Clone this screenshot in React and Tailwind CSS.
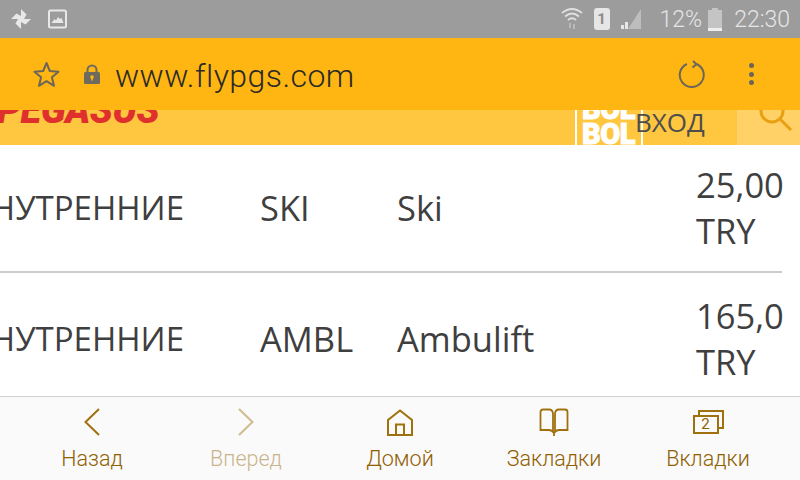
import React from "react";

const navGold = "#a0700f";

const StatusBar = () => (
  <div className="h-[38px] bg-[#9c9c9c] flex items-center shrink-0 pl-[11px] pr-[10px] text-[#e6e6e6]">
    <svg width="20" height="20" viewBox="0 0 20 20" fill="#e8e8e8">
      <path d="M10 10 L10 0 L15.500 5.500 L13 10 Z" />
      <path d="M10 10 L20 10 L14.500 15.500 L10 13 Z" />
      <path d="M10 10 L10 20 L4.500 14.500 L7 10 Z" />
      <path d="M10 10 L0 10 L5.500 4.500 L10 7 Z" />
    </svg>
    <svg className="ml-[17px]" width="19" height="20" viewBox="0 0 19 20" fill="none">
      <rect x="1" y="1.500" width="17" height="17" rx="1.500" stroke="#e8e8e8" strokeWidth="2" />
      <path d="M3.500 14 L6.500 10 L8 11.500 L10 8 L12 10 L13.500 9 L15.500 14 Z" fill="#e8e8e8" />
    </svg>
    <div className="flex-1" />
    <svg width="22" height="24" viewBox="0 0 22 24" fill="none" stroke="#e0e0e0" strokeWidth="1.800">
      <path d="M1 6 Q11 -2 21 6" />
      <path d="M4 9.500 Q11 3.500 18 9.500" />
      <path d="M7 13 Q11 9.500 15 13" />
      <path d="M9 21 V16 M13 17 V22" stroke="#bdbdbd" />
    </svg>
    <div className="ml-[11px] w-[16px] h-[22px] bg-[#e6e6e6] rounded-[3px] flex items-center justify-center text-[#8c8c8c] text-[15px] font-bold font-['Roboto',sans-serif]">
      1
    </div>
    <svg className="ml-[10px]" width="22" height="22" viewBox="0 0 22 22">
      <path d="M8 21 H21 V1 Z" fill="#bdbdbd" />
      <path d="M1 21 H4 V17 H1 Z M5 21 H8 V14 H5 Z" fill="#e6e6e6" />
    </svg>
    <span className="ml-[18px] text-[23px] leading-none font-['Roboto',sans-serif] font-light">12%</span>
    <div className="ml-[6px] w-[14px] h-[23px] flex flex-col items-center">
      <div className="w-[6px] h-[2px] bg-[#c4c4c4]" />
      <div className="w-[14px] h-[18px] bg-[#c4c4c4]" />
      <div className="w-[14px] h-[3px] bg-[#eeeeee]" />
    </div>
    <span className="ml-[12px] text-[23px] leading-none font-['Roboto',sans-serif] font-light">22:30</span>
  </div>
);

const UrlBar = () => (
  <div className="h-[72px] bg-[#ffb612] flex items-center shrink-0 relative z-10 pl-[33px] pr-[46px]">
    <svg width="27" height="27" viewBox="0 0 27 27" fill="none" stroke="#6b6657" strokeWidth="2" strokeLinejoin="round">
      <path d="M13.500 2 L16.800 10 L25.500 10.700 L18.900 16.300 L21 24.800 L13.500 20.200 L6 24.800 L8.100 16.300 L1.500 10.700 L10.200 10 Z" />
    </svg>
    <svg className="ml-[23px]" width="18" height="21" viewBox="0 0 18 21">
      <path d="M4.500 9 V6 a4.500 4.500 0 0 1 9 0 V9" fill="none" stroke="#6e6a5e" strokeWidth="2" />
      <rect x="1" y="8" width="16" height="12" rx="1.500" fill="#6e6a5e" />
      <circle cx="9" cy="13" r="1.800" fill="#ffb612" />
      <rect x="8.200" y="13" width="1.600" height="3.500" fill="#ffb612" />
    </svg>
    <span className="ml-[14px] mt-[4px] text-[32px] leading-none text-[#2b2a26] font-['Roboto',sans-serif] font-light tracking-[0.45px]">
      www.flypgs.com
    </span>
    <div className="flex-1" />
    <svg width="28" height="28" viewBox="0 0 28 28" fill="none" stroke="#6b6657" strokeWidth="2">
      <path d="M18.500 4 A12 12 0 1 1 9 4" />
      <path d="M15 1 L18.500 4.200 L14.500 7.500" />
    </svg>
    <div className="ml-[43px] flex flex-col gap-[3.500px]">
      <div className="w-[5px] h-[5px] rounded-full bg-[#6b6657]" />
      <div className="w-[5px] h-[5px] rounded-full bg-[#6b6657]" />
      <div className="w-[5px] h-[5px] rounded-full bg-[#6b6657]" />
    </div>
  </div>
);

const SiteHeader = () => (
  <div className="h-[35px] bg-[#ffc63f] flex shrink-0 overflow-hidden">
    <span className="ml-[-3px] mt-[-23px] h-[46px] text-[38px] leading-[46px] font-black italic text-[#e0302e] font-['Roboto',sans-serif] tracking-[-0.5px]">
      PEGASUS
    </span>
    <div className="flex-1" />
    <div className="w-[68px] h-[35px] border-x-2 border-white flex flex-col items-start pl-[5px]">
      <span className="mt-[-16px] text-[29px] leading-[30px] font-black text-white tracking-[-0.5px] font-['Roboto',sans-serif] [-webkit-text-stroke:1px_white]">BOL</span>
      <span className="mt-[-5px] text-[29px] leading-[30px] font-black text-white tracking-[-0.5px] font-['Roboto',sans-serif] [-webkit-text-stroke:1px_white]">BOL</span>
    </div>
    <div className="ml-[-8px] w-[102px] h-[25px] text-[#4d4d4d] text-[26px] leading-[25px] font-['Open_Sans',sans-serif]">
      <div>ВХОД</div>
    </div>
    <div className="w-[63px] bg-[#ffd166] overflow-hidden">
      <svg className="mt-[-13px] ml-[21px]" width="36" height="36" viewBox="0 0 36 36" fill="none" stroke="#e8a012" strokeWidth="3">
        <circle cx="14" cy="14" r="11" />
        <path d="M22 22 L33 33" />
      </svg>
    </div>
  </div>
);

const Row = ({ group, code, name, price, border }) => (
  <div className={`grid grid-cols-[260px_137px_299px_1fr] items-center shrink-0 text-[#3f3f3f] text-[34.500px] leading-[46px] font-['Open_Sans',sans-serif] ${border ? "h-[128px] border-b-[2px] border-[#cccccc] mr-[18px]" : "h-[132px]"}`}>
    <div className="flex justify-end pr-[76px] whitespace-nowrap">
      <span className="text-[33px]">{group}</span>
    </div>
    <div>{code}</div>
    <div>{name}</div>
    {/* the price cell clips long values, as on the real page */}
    <div className="w-[88px] overflow-hidden whitespace-nowrap">
      {price}
      <br />
      TRY
    </div>
  </div>
);

const NavItem = ({ label, faded, children }) => (
  <div className={`w-[154px] flex flex-col items-center ${faded ? "opacity-45" : ""}`}>
    <div className="h-[36px] flex items-center justify-center">{children}</div>
    <span className="mt-[6px] text-[21.500px] leading-[26px] font-['Roboto',sans-serif] font-light text-[#8f6000] whitespace-nowrap">
      {label}
    </span>
  </div>
);

const BottomNav = () => (
  <div className="h-[84px] bg-[#fafafa] border-t border-[#cfcfcf] shrink-0 flex px-[15px] pt-[7px]">
    <NavItem label="Назад">
      <svg width="16" height="28" viewBox="0 0 16 28" fill="none" stroke={navGold} strokeWidth="2">
        <path d="M15 1 L1.500 14 L15 27" />
      </svg>
    </NavItem>
    <NavItem label="Вперед" faded>
      <svg width="16" height="28" viewBox="0 0 16 28" fill="none" stroke={navGold} strokeWidth="2">
        <path d="M1 1 L14.500 14 L1 27" />
      </svg>
    </NavItem>
    <NavItem label="Домой">
      <svg width="26" height="27" viewBox="0 0 26 27" fill="none" stroke={navGold} strokeWidth="2">
        <path d="M1 26 V11 L13 1.500 L25 11 V26 Z" />
        <path d="M9 26 V15.500 H17 V26" />
      </svg>
    </NavItem>
    <NavItem label="Закладки">
      <svg width="30" height="28" viewBox="0 0 30 28" fill="none" stroke={navGold} strokeWidth="1.800">
        <path d="M14 24 V6 Q14 1.500 10 1.500 H4 Q1.500 1.500 1.500 4 V22 H10 Q13 22 15 25 V28" />
        <path d="M16 24 V6 Q16 1.500 20 1.500 H26 Q28.500 1.500 28.500 4 V22 H20 Q17 22 15 25" />
      </svg>
    </NavItem>
    <NavItem label="Вкладки">
      <div className="relative w-[31px] h-[24px]">
        <div className="absolute right-0 top-0 w-[26px] h-[19px] border-2 border-[#a0700f]" />
        <div className="absolute left-0 bottom-0 w-[26px] h-[19px] border-2 border-[#a0700f] bg-[#fafafa] flex items-center justify-center text-[15px] leading-none text-[#8f6000] font-['Roboto',sans-serif]">
          2
        </div>
      </div>
    </NavItem>
  </div>
);

export default function App() {
  return (
    <div className="w-[800px] h-[480px] flex flex-col overflow-hidden bg-white">
      <StatusBar />
      <UrlBar />
      <SiteHeader />
      <div className="flex-1 min-h-0 overflow-hidden">
        <Row group="ВНУТРЕННИЕ" code="SKI" name="Ski" price="25,00" border />
        <Row group="ВНУТРЕННИЕ" code="AMBL" name="Ambulift" price="165,00" />
      </div>
      <BottomNav />
    </div>
  );
}
